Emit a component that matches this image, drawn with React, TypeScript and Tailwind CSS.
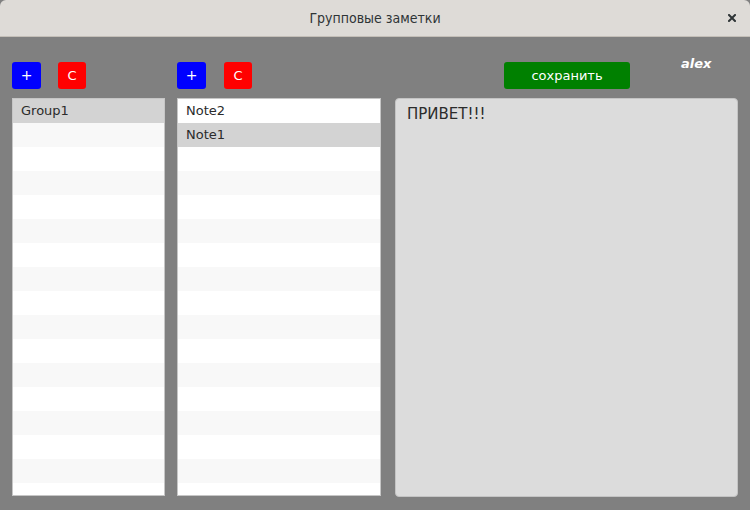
const groups = ["Group1"];
const notes = ["Note2", "Note1"];

function ListBox({ items, selected, width }: { items: string[]; selected: number; width: string }) {
  const rows = Array.from({ length: 17 }, (_, i) => items[i] ?? "");
  return (
    <div className={`${width} h-[398px] border border-[#c6c6c6] bg-white overflow-hidden`}>
      {rows.map((label, i) => (
        <div
          key={i}
          className={`h-6 pl-2 flex items-center text-[13px] text-[#2b2b2b] ${
            i === selected ? "bg-[#d3d3d3]" : i % 2 === 1 ? "bg-[#f8f8f8]" : "bg-white"
          }`}
        >
          {label}
        </div>
      ))}
    </div>
  );
}

function SmallButtons({ gap }: { gap: string }) {
  return (
    <div className={`flex ${gap} h-[27px]`}>
      <button className="w-[29px] h-[27px] rounded-[3px] bg-[#0000ff] text-white text-[14px] flex items-center justify-center">
        +
      </button>
      <button className="w-[28px] h-[27px] rounded-[3px] bg-[#ff0000] text-white text-[13px] flex items-center justify-center">
        C
      </button>
    </div>
  );
}

export default function App() {
  return (
    <div
      className="w-[750px] h-[510px] bg-[#808080] flex flex-col overflow-hidden"
      style={{ fontFamily: '"DejaVu Sans", "Noto Sans", sans-serif' }}
    >
      <div className="h-[37px] shrink-0 bg-[#dedbd7] rounded-t-[6px] border-b border-[#c4bfb8] relative flex items-center justify-center">
        <span
          className="text-[14px] text-[#2e3436] font-medium"
          style={{ fontFamily: '"DejaVu Sans Condensed", "DejaVu Sans", sans-serif', fontStretch: "condensed" }}
        >
          Групповые заметки
        </span>
        <svg className="absolute left-[728px] top-[14px]" width="8" height="8" viewBox="0 0 8 8">
          <path d="M1 1 L7 7 M7 1 L1 7" stroke="#2e3436" strokeWidth="2" strokeLinecap="square" />
        </svg>
      </div>

      <div className="flex pl-3 pt-[25px]">
        <div className="flex flex-col gap-[9px]">
          <SmallButtons gap="gap-[17px]" />
          <ListBox items={groups} selected={0} width="w-[153px]" />
        </div>
        <div className="flex flex-col gap-[9px] ml-3">
          <SmallButtons gap="gap-[18px]" />
          <ListBox items={notes} selected={1} width="w-[204px]" />
        </div>
        <div className="flex flex-col gap-[9px] ml-[14px]">
          <div className="h-[27px] flex items-start">
            <button className="ml-[109px] w-[126px] h-[27px] rounded-[3px] bg-[#008000] text-white text-[13px] flex items-center justify-center">
              сохранить
            </button>
            <span className="ml-[51px] -mt-[8px] text-[13px] font-bold italic text-white">alex</span>
          </div>
          <div className="w-[343px] h-[399px] rounded-[4px] bg-[#dcdcdc] border border-[#c4c4c4] pl-[11px] pt-[4px] text-[15px] text-[#2b2b2b]">
            ПРИВЕТ!!!
          </div>
        </div>
      </div>
    </div>
  );
}
